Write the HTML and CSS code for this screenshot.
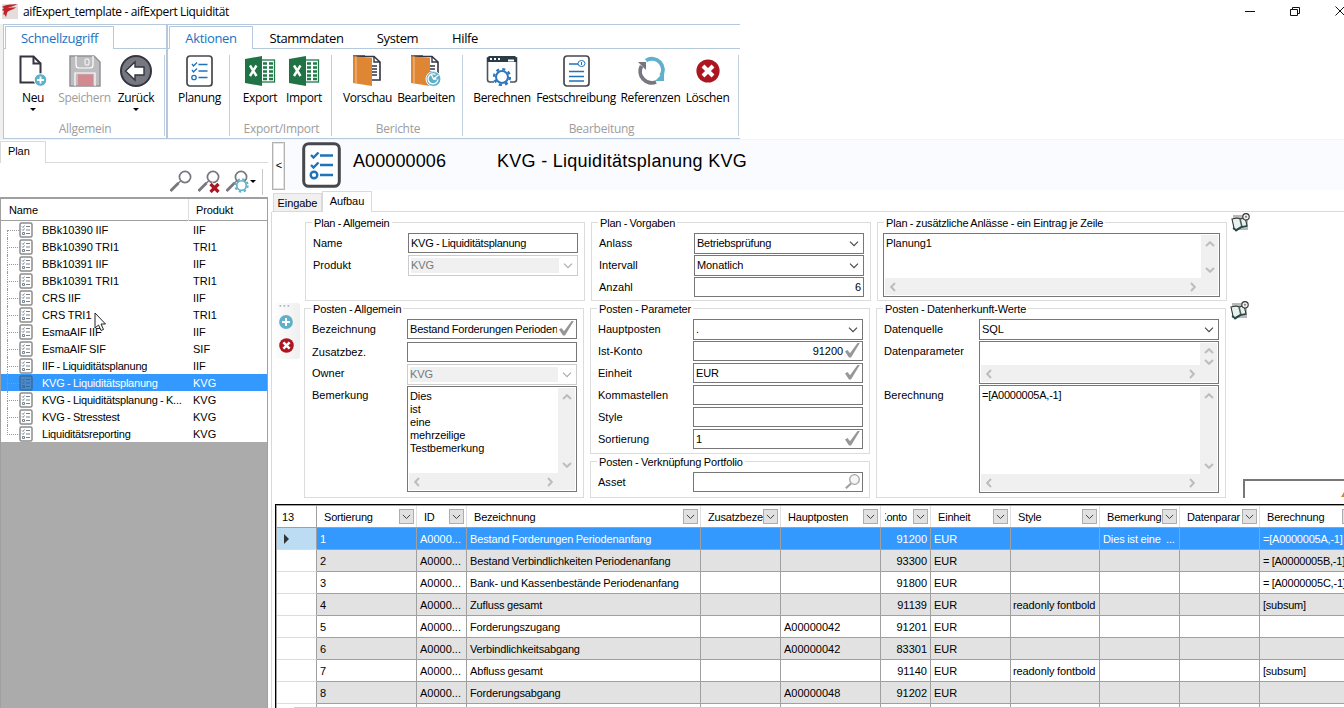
FILE: index.html
```html
<!DOCTYPE html>
<html lang="de">
<head>
<meta charset="utf-8">
<title>aifExpert_template - aifExpert Liquidität</title>
<link rel="stylesheet" href="styles.css">
</head>
<body>
<svg class="defs" width="0" height="0">
  <symbol id="plan" viewBox="0 0 39 46">
    <rect x="1.700" y="1.700" width="35.600" height="42.600" rx="5" fill="#fff" stroke="#47484d" stroke-width="3"/>
    <g fill="none" stroke="#1d74bb" stroke-width="2.400"><path d="M9 13l2.500 2.500 5-5M9 23l2.500 2.500 5-5M18 13.500h13M18 23h13M18 33h13"/><circle cx="12" cy="33" r="3.300"/></g>
  </symbol>
  <symbol id="treeplan" viewBox="0 0 14 16">
    <rect x="1" y="1" width="12" height="14" rx="1.500" fill="#fff" fill-opacity=".75" stroke="#8c8c8c" stroke-width="1.500"/>
    <path d="M3 4.500l1 1 1.500-2M3 7.500l1 1 1.500-2M7 4.500h4M7 8h4M7 11.500h4M3.500 10.500h2v2h-2z" fill="none" stroke="#76828e" stroke-width="1"/>
  </symbol>
  <symbol id="chev" viewBox="0 0 10 6"><path d="M1 .7l4 4 4-4" fill="none" stroke="currentColor" stroke-width="1.100"/></symbol>
  <symbol id="fat" viewBox="0 0 10 6"><path d="M1 1l4 3.800 4-3.800" fill="none" stroke="#bdbdbd" stroke-width="2"/></symbol>
  <symbol id="check" viewBox="0 0 15 15"><path d="M0 8.500l2.500-1.500 2.500 3.200L12.500 0h2.300L6 14.500H4z" fill="#979797"/></symbol>
  <symbol id="lens" viewBox="0 0 22 22"><circle cx="15" cy="7" r="5.600" fill="none" stroke="#77777f" stroke-width="1.700"/><path d="M10.500 11L8 13.500" stroke="#77777f" stroke-width="1.500"/><path d="M8.500 13l-8 8" stroke="#77777f" stroke-width="2.800"/></symbol>
  <symbol id="excel" viewBox="0 0 32 32">
    <rect x="17" y="5" width="13.500" height="22" fill="#fff" stroke="#21794a" stroke-width="1.300"/>
    <path d="M19 8.500h4M25 8.500h4M19 12.500h4M25 12.500h4M19 16.500h4M25 16.500h4M19 20.500h4M25 20.500h4M19 24h4M25 24h4" stroke="#21794a" stroke-width="2.400"/>
    <path d="M1 4L18 1v30L1 28z" fill="#1f7345"/><path d="M6 10.500l6.500 10.500M12.500 10.500L6 21" stroke="#fff" stroke-width="2.400"/>
  </symbol>
  <symbol id="book" viewBox="1 0 30 32">
    <path d="M4 1.500h18l6 5.500v18h-9" fill="#fff" stroke="#333540" stroke-width="1.600"/><path d="M22 1.500V7h6M20 11h5M20 14h5M20 17h5M20 20h5" fill="none" stroke="#333540" stroke-width="1.400"/>
    <path d="M1 1l19 2v28L1 28z" fill="#df8635"/><path d="M4 1.300v27.500" stroke="#f5c59b" stroke-width="1"/><path d="M1 .8h12" stroke="#333540" stroke-width="1"/>
  </symbol>
  <symbol id="cross" viewBox="0 0 24 24"><circle cx="12" cy="12" r="11.600" fill="#ab1620"/><path d="M7 7l10 10M17 7L7 17" stroke="#fff" stroke-width="4"/></symbol>
  <symbol id="gear" viewBox="0 0 20 20"><circle cx="10" cy="10" r="8.400" fill="none" stroke="currentColor" stroke-width="2.400" stroke-dasharray="3.300 3.300"/><circle cx="10" cy="10" r="6.300" fill="#fff" stroke="currentColor" stroke-width="2.200"/></symbol>
  <symbol id="note" viewBox="0 0 19 19">
    <path d="M2 2h15v15H2z" fill="#b9b9b9"/><path d="M1 6l5-1 4 1 4-2 2 9-5 1-6 4-2-3z" fill="#e9f1ee" stroke="#2b3434" stroke-width="1.100"/><path d="M9 6l2 8" stroke="#49605c" stroke-width="1.500"/><path d="M2 15l3 2 5-3 6-1" fill="none" stroke="#244a48" stroke-width="1.600"/><circle cx="15" cy="3.800" r="3.200" fill="#eee" stroke="#333" stroke-width="1.100"/><circle cx="15" cy="3.800" r="1" fill="#777"/>
  </symbol>
</svg>

<header class="titlebar">
  <svg class="logo" width="16" height="16" viewBox="0 0 16 16"><rect y="1" width="16" height="15" fill="#e3dedc"/><path d="M0 4c4-3 9-2 15-3-3 3-7 2-9 4 3-1 5 0 8-1-3 4-7 2-9 6l-1 4-2-3-1 1 1-4-2-1 2-2z" fill="#c3222b"/></svg>
  <span class="apptitle">aifExpert_template - aifExpert Liquidität</span>
  <svg class="winbtns" width="110" height="20" viewBox="0 0 110 20" fill="none" stroke="#111"><path d="M11 10.500h10M101.500 5.500l9 9M110.500 5.500l-9 9"/><path d="M56.500 8.500h7v6h-7zM58.500 8.500v-2h7v6h-2"/></svg>
</header>

<nav class="ribbon">
  <section class="rpart quick">
    <div class="rtabs"><span class="rtab active">Schnellzugriff</span></div>
    <div class="rgroups">
      <div class="rgroup allg"><div class="rbtns">
        <div class="rbtn"><svg width="28" height="32" viewBox="0 0 28 32"><path d="M1.500 1.500h13l7 7v19h-20z" fill="#fff" stroke="#333540" stroke-width="2"/><path d="M14.500 1.500v7h7" fill="none" stroke="#333540" stroke-width="2"/><circle cx="21.500" cy="25" r="6.300" fill="#5fb0cb" stroke="#fff"/><path d="M18 25h7M21.500 21.500v7" stroke="#fff" stroke-width="1.800"/></svg><span>Neu</span><i class="drop"></i></div>
        <div class="rbtn off"><svg width="32" height="32" viewBox="0 0 32 32"><path d="M1 1h24l6 6v24H1z" fill="#bdbdc0" stroke="#929296" stroke-width="1.500"/><path d="M7 1v9q0 3 3 3h11q3 0 3-3V1M6 31V18h20v13" fill="none" stroke="#fff" stroke-width="1.200"/><rect x="9" y="19.500" width="15" height="11" fill="#d28a90"/><rect x="16" y="4" width="4" height="6" rx="1" fill="none" stroke="#fff"/></svg><span>Speichern</span></div>
        <div class="rbtn"><svg width="32" height="32" viewBox="0 0 32 32"><circle cx="16" cy="16" r="15" fill="#777780" stroke="#333540" stroke-width="2"/><path d="M5.500 16L15 7v5h9v8h-9v5z" fill="#fff" stroke="#333540" stroke-width="1.400"/></svg><span>Zurück</span><i class="drop"></i></div>
      </div><div class="rlabel">Allgemein</div></div>
    </div>
  </section>
  <section class="rpart main">
    <div class="rtabs"><span class="rtab active akt">Aktionen</span><span class="rtab stamm">Stammdaten</span><span class="rtab sys">System</span><span class="rtab hilfe">Hilfe</span></div>
    <div class="rgroups">
      <div class="rgroup g1"><div class="rbtns"><div class="rbtn"><svg width="27" height="32" viewBox="0 0 27 32"><rect x="1" y="1" width="25" height="30" rx="3" fill="#fff" stroke="#47484d" stroke-width="1.700"/><path d="M6 9l1.500 2L11 7.500M6 15l1.500 2 3.500-3.500M12.500 9.500h9M12.500 16h9M12.500 22.500h9" fill="none" stroke="#1d74bb" stroke-width="1.300"/><circle cx="8" cy="22.500" r="2.200" fill="none" stroke="#1d74bb" stroke-width="1.300"/></svg><span>Planung</span></div></div></div>
      <div class="rgroup g2"><div class="rbtns"><div class="rbtn"><svg width="32" height="32"><use href="#excel"/></svg><span>Export</span></div><div class="rbtn"><svg width="32" height="32"><use href="#excel"/></svg><span>Import</span></div></div><div class="rlabel">Export/Import</div></div>
      <div class="rgroup g3"><div class="rbtns"><div class="rbtn"><svg width="30" height="32"><use href="#book"/></svg><span>Vorschau</span></div><div class="rbtn"><svg width="30" height="32" viewBox="0 0 30 32"><use href="#book" width="30" height="32"/><circle cx="22.500" cy="24" r="7.500" fill="#5fb0cb" stroke="#fff"/><path d="M24.500 19.500a5 5 0 1 0 2.500 5M20.500 20l2 4 5-4M22.500 24h3" fill="none" stroke="#fff" stroke-width="1.300"/></svg><span>Bearbeiten</span></div></div><div class="rlabel">Berichte</div></div>
      <div class="rgroup g4"><div class="rbtns">
        <div class="rbtn"><svg width="32" height="32" viewBox="0 0 32 32"><path d="M8 27H4a2.500 2.500 0 0 1-2.500-2.500V3h29v21.500A2.500 2.500 0 0 1 28 27h-4" fill="none" stroke="#4a5560" stroke-width="1.600"/><path d="M1 7V3l2-2h26l2 2v4z" fill="#2b3c49"/><path d="M4 4h2M8 4h2M12 4h2M22 5.500h6" stroke="#fff" stroke-width="2"/><g color="#2c77bd"><use href="#gear" x="6.500" y="12.500" width="19" height="19"/></g></svg><span>Berechnen</span></div>
        <div class="rbtn"><svg width="27" height="32" viewBox="0 0 27 32"><rect x="1" y="1" width="25" height="30" rx="3" fill="#fff" stroke="#47484d" stroke-width="1.700"/><path d="M6 9h10M6 16.500h15M6 21.500h15M6 26h15" stroke="#1d74bb" stroke-width="1.400"/><ellipse cx="18.500" cy="8.500" rx="3.500" ry="3" fill="#fff" stroke="#1d74bb"/><path d="M18.500 7v3" stroke="#1d74bb"/></svg><span>Festschreibung</span></div>
        <div class="rbtn"><svg width="28" height="32" viewBox="0 0 28 32"><path d="M9 5.500A11 11 0 0 1 24 21" fill="none" stroke="#5fb0cb" stroke-width="3.800"/><path d="M27 17v9h-9z" fill="#5fb0cb"/><path d="M19 27A11.500 11.500 0 0 1 4.500 11" fill="none" stroke="#777780" stroke-width="3.800"/><path d="M1 7h8v8z" fill="#777780"/></svg><span>Referenzen</span></div>
        <div class="rbtn"><svg width="24" height="32" viewBox="0 0 24 32"><use href="#cross" y="4" width="24" height="24"/></svg><span>Löschen</span></div>
      </div><div class="rlabel">Bearbeitung</div></div>
    </div>
  </section>
</nav>

<main class="work">
  <aside class="side">
    <div class="sidetabs"><span class="sidetab">Plan</span></div>
    <div class="sidetools">
      <svg width="22" height="22"><use href="#lens"/></svg>
      <svg width="22" height="23" viewBox="0 0 22 23"><use href="#lens" width="22" height="22"/><path d="M12.500 14l8 8M20.500 14l-8 8" stroke="#fff" stroke-width="5"/><path d="M12.500 14l8 8M20.500 14l-8 8" stroke="#ab1620" stroke-width="3.200"/></svg>
      <svg width="23" height="23" viewBox="0 0 23 23"><use href="#lens" width="22" height="22"/><g color="#5fb0cb"><use href="#gear" x="8" y="8" width="15" height="15"/></g></svg>
      <i class="drop"></i>
    </div>
    <div class="tree">
      <div class="trow thead"><span>Name</span><span>Produkt</span></div>
      <div class="tbody">
      <div class="trow"><svg><use href="#treeplan"/></svg><span>BBk10390 IIF</span><span>IIF</span></div>
      <div class="trow"><svg><use href="#treeplan"/></svg><span>BBk10390 TRI1</span><span>TRI1</span></div>
      <div class="trow"><svg><use href="#treeplan"/></svg><span>BBk10391 IIF</span><span>IIF</span></div>
      <div class="trow"><svg><use href="#treeplan"/></svg><span>BBk10391 TRI1</span><span>TRI1</span></div>
      <div class="trow"><svg><use href="#treeplan"/></svg><span>CRS IIF</span><span>IIF</span></div>
      <div class="trow"><svg><use href="#treeplan"/></svg><span>CRS TRI1</span><span>TRI1</span></div>
      <div class="trow"><svg><use href="#treeplan"/></svg><span class="n2x">EsmaAIF IIF</span><span>IIF</span></div>
      <div class="trow"><svg><use href="#treeplan"/></svg><span class="n2x">EsmaAIF SIF</span><span>SIF</span></div>
      <div class="trow"><svg><use href="#treeplan"/></svg><span class="n1">IIF - Liquiditätsplanung</span><span>IIF</span></div>
      <div class="trow sel"><svg><use href="#treeplan"/></svg><span class="n1">KVG - Liquiditätsplanung</span><span>KVG</span></div>
      <div class="trow"><svg><use href="#treeplan"/></svg><span class="n1">KVG - Liquiditätsplanung - K...</span><span>KVG</span></div>
      <div class="trow"><svg><use href="#treeplan"/></svg><span class="n1">KVG - Stresstest</span><span>KVG</span></div>
      <div class="trow"><svg><use href="#treeplan"/></svg><span class="n1">Liquiditätsreporting</span><span>KVG</span></div>
      </div>
      <svg class="cursor" width="13" height="20" viewBox="0 0 13 20"><path d="M1 1v15l3.500-3 2.500 5.500 2.500-1-2.500-5.500h4.500z" fill="#fff" stroke="#222"/></svg>
    </div>
  </aside>

  <section class="detail">
    <div class="dhead">
      <div class="collapse">&lt;</div>
      <svg class="dicon" width="39" height="46"><use href="#plan"/></svg>
      <span class="did">A00000006</span><span class="dname">KVG - Liquiditätsplanung KVG</span>
    </div>
    <div class="dtabs"><span class="dtab">Eingabe</span><span class="dtab active">Aufbau</span></div>

    <div class="page">
      <div class="line1">
        <div class="group pa"><b>Plan - Allgemein</b>
          <div class="field"><label>Name</label><div class="in n1">KVG - Liquiditätsplanung</div></div>
          <div class="field"><label>Produkt</label><div class="in combo dis"><span>KVG</span><svg><use href="#chev"/></svg></div></div>
        </div>
        <div class="group pv"><b>Plan - Vorgaben</b>
          <div class="field"><label>Anlass</label><div class="in combo n1">Betriebsprüfung<svg><use href="#chev"/></svg></div></div>
          <div class="field"><label>Intervall</label><div class="in combo">Monatlich<svg><use href="#chev"/></svg></div></div>
          <div class="field"><label>Anzahl</label><div class="in num">6</div></div>
        </div>
        <div class="group pz"><b>Plan - zusätzliche Anlässe - ein Eintrag je Zeile</b>
          <div class="area a1"><div class="txt">Planung1</div><div class="vs"><svg class="up"><use href="#fat"/></svg><svg><use href="#fat"/></svg></div><div class="hs"><svg class="lt"><use href="#fat"/></svg><svg class="rt"><use href="#fat"/></svg></div></div>
        </div>
        <svg class="note" width="19" height="19"><use href="#note"/></svg>
      </div>
      <div class="line2">
        <div class="tools"><em>•••</em><svg width="14" height="14" viewBox="0 0 14 14"><circle cx="7" cy="7" r="6.900" fill="#5fb0cb"/><path d="M3 7h8M7 3v8" stroke="#fff" stroke-width="2"/></svg><svg width="15" height="15"><use href="#cross"/></svg></div>
        <div class="group qa"><b>Posten - Allgemein</b>
          <div class="field"><label>Bezeichnung</label><div class="in chk"><span class="clip">Bestand Forderungen Periodenanfang</span><svg><use href="#check"/></svg></div></div>
          <div class="field zus"><label>Zusatzbez.</label><div class="in"></div></div>
          <div class="field own"><label>Owner</label><div class="in combo dis"><span>KVG</span><svg><use href="#chev"/></svg></div></div>
          <div class="field bem"><label>Bemerkung</label><div class="area"><div class="txt">Dies<br>ist<br>eine<br>mehrzeilige<br>Testbemerkung</div><div class="vs"><svg class="up"><use href="#fat"/></svg><svg><use href="#fat"/></svg></div><div class="hs"><svg class="lt"><use href="#fat"/></svg><svg class="rt"><use href="#fat"/></svg></div></div></div>
        </div>
        <div class="col2">
          <div class="group qp"><b>Posten - Parameter</b>
            <div class="field"><label>Hauptposten</label><div class="in combo">.<svg><use href="#chev"/></svg></div></div>
            <div class="field"><label>Ist-Konto</label><div class="in num chk">91200<svg><use href="#check"/></svg></div></div>
            <div class="field"><label>Einheit</label><div class="in chk">EUR<svg><use href="#check"/></svg></div></div>
            <div class="field"><label>Kommastellen</label><div class="in"></div></div>
            <div class="field"><label>Style</label><div class="in"></div></div>
            <div class="field"><label>Sortierung</label><div class="in chk">1<svg><use href="#check"/></svg></div></div>
          </div>
          <div class="group qv"><b>Posten - Verknüpfung Portfolio</b>
            <div class="field"><label>Asset</label><div class="in find"><svg viewBox="0 0 15 15"><circle cx="9.500" cy="5.500" r="4.800" fill="#f6f6f6" stroke="#a5a5a5" stroke-width="1.300"/><path d="M6 9.500L.8 14.200" stroke="#a0a0a0" stroke-width="2.200"/></svg></div></div>
          </div>
        </div>
        <div class="group qd"><b>Posten - Datenherkunft-Werte</b>
          <div class="field"><label>Datenquelle</label><div class="in combo">SQL<svg><use href="#chev"/></svg></div></div>
          <div class="field dpar"><label>Datenparameter</label><div class="area"><div class="txt"></div><div class="vs"><svg class="up"><use href="#fat"/></svg><svg><use href="#fat"/></svg></div><div class="hs"><svg class="lt"><use href="#fat"/></svg><svg class="rt"><use href="#fat"/></svg></div></div></div>
          <div class="field dber"><label>Berechnung</label><div class="area"><div class="txt n1">=[A0000005A,-1]</div><div class="vs"><svg class="up"><use href="#fat"/></svg><svg><use href="#fat"/></svg></div><div class="hs"><svg class="lt"><use href="#fat"/></svg><svg class="rt"><use href="#fat"/></svg></div></div></div>
        </div>
        <svg class="note n2" width="19" height="19"><use href="#note"/></svg>
        <div class="corner"><svg width="3" height="7" viewBox="0 0 3 7"><path d="M0 6l3-5v5z" fill="#d78035"/></svg></div>
      </div>

      <div class="gridbox">
      <table class="grid">
        <colgroup><col class="c0"><col class="c1"><col class="c2"><col class="c3"><col class="c4"><col class="c5"><col class="c2"><col class="c4"><col class="c8"><col class="c4"><col class="c4"><col class="c5"></colgroup>
        <thead><tr><th class="cnt">13</th>
          <th><div><span>Sortierung</span><i><svg><use href="#chev"/></svg></i></div></th><th><div><span>ID</span><i><svg><use href="#chev"/></svg></i></div></th><th><div><span>Bezeichnung</span><i><svg><use href="#chev"/></svg></i></div></th><th><div><span>Zusatzbeze</span><i><svg><use href="#chev"/></svg></i></div></th><th><div><span>Hauptposten</span><i><svg><use href="#chev"/></svg></i></div></th><th class="konto"><div><span>Konto</span><i><svg><use href="#chev"/></svg></i></div></th><th><div><span>Einheit</span><i><svg><use href="#chev"/></svg></i></div></th><th><div><span>Style</span><i><svg><use href="#chev"/></svg></i></div></th><th><div><span>Bemerkung</span><i><svg><use href="#chev"/></svg></i></div></th><th><div><span>Datenparar</span><i><svg><use href="#chev"/></svg></i></div></th><th><div><span>Berechnung</span><i><svg><use href="#chev"/></svg></i></div></th></tr></thead>
        <tbody>
          <tr class="sel"><td><u></u></td><td>1</td><td>A0000...</td><td>Bestand Forderungen Periodenanfang</td><td></td><td></td><td>91200</td><td>EUR</td><td></td><td>Dies ist eine &nbsp;...</td><td></td><td>=[A0000005A,-1]</td></tr>
          <tr><td></td><td>2</td><td>A0000...</td><td>Bestand Verbindlichkeiten Periodenanfang</td><td></td><td></td><td>93300</td><td>EUR</td><td></td><td></td><td></td><td>= [A0000005B,-1]</td></tr>
          <tr><td></td><td>3</td><td>A0000...</td><td>Bank- und Kassenbestände Periodenanfang</td><td></td><td></td><td>91800</td><td>EUR</td><td></td><td></td><td></td><td>= [A0000005C,-1]</td></tr>
          <tr><td></td><td>4</td><td>A0000...</td><td>Zufluss gesamt</td><td></td><td></td><td>91139</td><td>EUR</td><td>readonly fontbold</td><td></td><td></td><td>[subsum]</td></tr>
          <tr><td></td><td>5</td><td>A0000...</td><td>Forderungszugang</td><td></td><td>A00000042</td><td>91201</td><td>EUR</td><td></td><td></td><td></td><td></td></tr>
          <tr><td></td><td>6</td><td>A0000...</td><td>Verbindlichkeitsabgang</td><td></td><td>A00000042</td><td>83301</td><td>EUR</td><td></td><td></td><td></td><td></td></tr>
          <tr><td></td><td>7</td><td>A0000...</td><td>Abfluss gesamt</td><td></td><td></td><td>91140</td><td>EUR</td><td>readonly fontbold</td><td></td><td></td><td>[subsum]</td></tr>
          <tr><td></td><td>8</td><td>A0000...</td><td>Forderungsabgang</td><td></td><td>A00000048</td><td>91202</td><td>EUR</td><td></td><td></td><td></td><td></td></tr>
          <tr><td></td><td></td><td></td><td></td><td></td><td></td><td></td><td></td><td></td><td></td><td></td><td></td></tr>
        </tbody>
      </table>
      <div class="hscroll"></div>
      </div>
    </div>
  </section>
</main>
</body>
</html>
```
FILE: styles.css
```css
* { box-sizing: border-box; }
body { margin: 0; width: 1344px; height: 708px; overflow: hidden; background: #fff; color: #000; font: 11px/14px "Liberation Sans", Arial, sans-serif; white-space: nowrap; }
svg { display: block; flex: none; }
.defs { position: absolute; }
.n1 { letter-spacing: -.24px; }
.n2x { letter-spacing: -.1px; }

.titlebar { height: 24px; display: flex; align-items: center; padding-left: 2px; font: 12px/16px "Open Sans", "Noto Sans", sans-serif; }
.logo { margin-top: -3px; }
.apptitle { margin-left: 5px; letter-spacing: -.37px; }
.winbtns { margin: -3px 0 0 auto; }

.ribbon { height: 116px; display: flex; font: 12px/16px "Open Sans", "Noto Sans", sans-serif; border-left: 3px solid #f0f0f0; border-bottom: 1px solid #f3f3f3; }
.rpart { height: 115px; border-top: 1px solid #b5c8dc; border-bottom: 1px solid #b5c8dc; display: flex; flex-direction: column; }
.quick { width: 164px; border-left: 1px solid #b5c8dc; border-right: 1px solid #b5c8dc; }
.main { width: 573px; border-left: 1px solid #b5c8dc; }
.rtabs { height: 24px; display: flex; box-shadow: inset 0 -1px #b5c8dc; }
.rtab { line-height: 26px; text-align: center; font-size: 13px; letter-spacing: -.4px; }
.rtab.active { color: #1a72c4; background: #fff; border: solid #b5c8dc; border-width: 1px 1px 0; margin-top: 1px; line-height: 22px; letter-spacing: -.33px; }
.quick .rtab { width: 109px; margin-left: 1px; }
.akt { width: 84px; margin-left: 1px; }
.stamm { width: 107px; }
.sys { width: 75px; }
.hilfe { width: 60px; }
.rgroups { flex: 1; display: flex; }
.rgroup { display: flex; flex-direction: column; justify-content: space-between; margin: 6px 0 0; border-right: 1px solid #c0cedd; height: 81px; }
.allg { width: 161px; }
.g1 { width: 62px; } .g2 { width: 102px; } .g3 { width: 131px; } .g4 { width: 276px; }
.rbtns { display: flex; height: 59px; }
.rbtn { display: flex; flex-direction: column; align-items: center; width: 52px; letter-spacing: -.38px; }
.rbtn span { margin-top: 2px; line-height: 17px; }
.rbtn.off span, .rlabel { color: #9d9d9d; }
.allg .rbtns { padding-left: 3px; }
.allg .rbtn:nth-child(2) { width: 51px; }
.g1 .rbtn { width: 63px; flex: none; }
.g2 .rbtns { padding-left: 8px; } .g2 .rbtn { width: 44px; }
.g3 .rbtns { padding-left: 6px; } .g3 .rbtn { width: 59px; }
.g3 .rbtn:nth-child(2) { width: 58px; }
.g4 .rbtns { padding-left: 5px; } .g4 .rbtn { width: 68px; } .g4 .rbtn:nth-child(2) { width: 80px; } .g4 .rbtn:nth-child(3) { width: 69px; } .g4 .rbtn:nth-child(4) { width: 45px; }
.rlabel { text-align: center; height: 16px; line-height: 17px; letter-spacing: -.27px; padding-left: 2px; }
.drop { border: 3px solid transparent; border-top-color: #000; border-bottom: 0; width: 0; }
.rbtn .drop { margin-top: 2px; }

.work { display: flex; height: 568px; letter-spacing: -.08px; word-spacing: -.4px; }
.side { width: 272px; background: #fff; display: flex; flex-direction: column; }
.sidetabs { height: 23px; display: flex; width: 268px; box-shadow: inset 0 -1px #d9d9d9; }
.sidetab { background: #fff; width: 46px; border: 1px solid #d9d9d9; border-bottom: 0; margin-top: 1px; padding-left: 7px; line-height: 18px; }
.sidetools { height: 34px; width: 263px; display: flex; align-items: flex-start; gap: 6px; padding: 7px 0 0 170px; background: linear-gradient(#c8c8c8, #c8c8c8) 262px 6px / 1px 26px no-repeat; }
.sidetools .drop { margin: 10px 0 0 -5px; }
.tree { position: relative; width: 268px; flex: 1; background: #ababab; border: solid #a0a0a0; border-width: 2px 1px 0; display: flex; flex-direction: column; }
.trow { position: relative; height: 17px; line-height: 18px; background: #fff; display: grid; grid-template-columns: 14px 151px 1fr; padding-left: 18px; align-items: center; }
.trow svg { width: 14px; height: 16px; }
.trow span { padding-left: 9px; letter-spacing: 0; }
.trow .n1 { letter-spacing: -.22px; }
.trow .n2x { letter-spacing: -.1px; }
.thead { height: 22px; grid-template-columns: 187px 1fr; padding: 0; border-bottom: 1px solid #a0a0a0; }
.trow.thead span { padding-left: 8px; line-height: 23px; letter-spacing: -.1px; }
.trow.thead span:last-child { border-left: 1px solid #ddd; padding-left: 7px; }
.tbody .trow::before { content: ""; position: absolute; left: 6px; top: 0; width: 12px; height: 9px; border-left: 1px dotted #999; border-bottom: 1px dotted #999; }
.tbody .trow:not(:last-child)::after { content: ""; position: absolute; left: 6px; top: 9px; height: 8px; border-left: 1px dotted #999; }
.tbody .trow:first-child::before { border-left: 0; }
.tree .sel { background: #3399ff; color: #fff; }
.tree .sel svg { filter: brightness(.45); opacity: .5; }
.cursor { position: absolute; left: 93px; top: 113px; }

.detail { width: 1072px; display: flex; flex-direction: column; }
.dhead { height: 50px; background: #fafbfe; display: flex; font-size: 18px; line-height: 43px; word-spacing: 0; }
.collapse { width: 13px; height: 48px; margin: 2px 0 0; border: 1px solid #b2b2b2; background: #fff; box-shadow: inset 0 0 0 1px #e3e3e3; text-align: center; font-size: 11px; line-height: 45px; padding-left: 1px; }
.dicon { margin: 2px 0 0 17px; }
.did { margin-left: 12px; width: 144px; letter-spacing: .1px; }
.dname { letter-spacing: .28px; }
.dtabs { height: 22px; display: flex; align-items: flex-end; box-shadow: inset 0 -1px #d9d9d9; }
.dtab { margin-left: 1px; width: 49px; height: 19px; background: #f0f0f0; border: 1px solid #d9d9d9; text-align: center; line-height: 18px; }
.dtab.active { margin: 0; width: 50px; height: 21px; background: #fff; border-bottom: 0; }

.page { height: 496px; border-left: 1px solid #d9d9d9; margin-left: -1px; display: flex; flex-direction: column; }
.line1 { display: flex; height: 89px; padding: 10px 0 0 33px; align-items: flex-start; }
.line2 { display: flex; height: 203px; padding: 7px 0 0 3px; align-items: flex-start; }
.group { border: 1px solid #dcdcdc; padding: 0 6px 0 7px; display: flex; flex-direction: column; flex: none; }
.group b { font-weight: 400; background: #fff; align-self: flex-start; margin: -7px 0 3px -1px; padding: 0 2px; line-height: 14px; height: 14px; letter-spacing: -.2px; }
.line2 .group b { letter-spacing: -.14px; }
.field { display: flex; height: 22px; }
.field label { width: 95px; line-height: 20px; letter-spacing: .03px; }
.in { flex: 1; height: 20px; border: 1px solid #777; background: #fff; line-height: 19px; padding: 0 2px; display: flex; min-width: 0; }
.combo { height: 21px; justify-content: space-between; align-items: flex-start; }
.combo svg { width: 10px; height: 6px; margin: 7px 2px 0 0; color: #444; }
.dis { border-color: #ccc; color: #777; padding: 2px 2px; line-height: 15px; }
.dis span { background: #f0f0f0; width: 148px; height: 15px; }
.dis svg { margin-top: 5px; color: #aaa; }
.num { justify-content: flex-end; }
.chk { justify-content: space-between; padding-right: 1px; }
.chk.num { justify-content: flex-end; }
.in.chk svg, .find svg { width: 15px; height: 15px; margin: 1px 1px 0 2px; }
.find { justify-content: flex-end; padding-right: 1px; }
.clip { width: 149px; overflow: hidden; letter-spacing: -.17px; }
.pa { width: 280px; height: 79px; } .pv { width: 280px; height: 79px; margin-left: 6px; } .pz { width: 350px; height: 79px; margin-left: 6px; padding-left: 5px; }
.pz b { margin-left: 1px; letter-spacing: -.17px; }
.note { margin: -9px 0 0 4px; }
.n2 { margin-top: -7px; }
.tools { width: 25px; height: 56px; background: linear-gradient(90deg, #fdfdfd, #efefef); border-radius: 3px; margin-top: -5px; display: flex; flex-direction: column; align-items: center; }
.tools em { font: 6px/6px "DejaVu Sans", sans-serif; color: #aaa; margin: 0 0 6px -6px; letter-spacing: .5px; }
.tools svg { margin: 0 0 9px -3px; }
.qa { width: 280px; height: 190px; margin-left: 4px; }
.zus { height: 23px; padding-top: 1px; }
.own label, .bem label { line-height: 18px; }
.bem, .dpar, .dber { height: auto; }
.col2 { margin-left: 6px; display: flex; flex-direction: column; gap: 7px; }
.qp { width: 280px; height: 146px; } .qv { width: 280px; height: 37px; }
.qd { width: 350px; height: 190px; margin-left: 6px; }
.area { flex: 1; border: 1px solid #777; background: #fff; padding: 1px; display: grid; grid-template-columns: 1fr 17px; grid-template-rows: 1fr 17px; min-width: 0; }
.area .txt { padding: 2px 0 0 1px; line-height: 13px; }
.vs { background: #f0f0f0; grid-row: 1 / 3; grid-column: 2; display: flex; flex-direction: column; justify-content: space-between; align-items: center; padding: 6px 0 22px; }
.hs { background: #f0f0f0; grid-row: 2; grid-column: 1; display: flex; justify-content: space-between; align-items: center; padding: 0 3px 0 3px; }
.vs svg, .hs svg { width: 10px; height: 6px; }
.up { transform: rotate(180deg); } .lt { transform: rotate(90deg); } .rt { transform: rotate(-90deg); }
.a1 { height: 64px; flex: none; }
.bem .area { height: 106px; }
.dpar .area { height: 43px; margin-bottom: 1px; } .dpar .vs { padding: 5px 0 17px; }
.dber .area { height: 108px; }
.corner { margin: 171px 0 0 -6px; width: 101px; height: 19px; border: 1px solid #777; border-width: 2px 0 0 2px; display: flex; justify-content: flex-end; align-items: flex-end; flex: none; }

.gridbox { margin-left: 3px; width: 1069px; height: 204px; border: solid #000; border-width: 1px 0 0 1px; overflow: hidden; position: relative; }
.grid { width: 1084px; table-layout: fixed; border-collapse: separate; border-spacing: 0; border: solid #a0a0a0; border-width: 1px 0 0 1px; }
.c0 { width: 40px; } .c1 { width: 100px; } .c2 { width: 50px; } .c3 { width: 234px; } .c4 { width: 80px; } .c5 { width: 100px; } .c8 { width: 89px; }
.grid th { font-weight: 400; height: 22px; padding: 0; border: solid #a0a0a0; border-width: 0 0 1px; box-shadow: inset -1px 0 #e0e0e0; text-align: left; }
.grid th.cnt { padding-left: 5px; border-right-width: 1px; box-shadow: none; }
.grid th div { display: flex; align-items: center; padding: 0 3px 0 7px; height: 21px; }
.grid th span { flex: 1; min-width: 0; letter-spacing: -.2px; }
.grid th i { width: 15px; height: 15px; background: #e1e1e1; border: 1px solid #adadad; display: flex; align-items: center; justify-content: center; color: #444; flex: none; }
.grid th svg { width: 9px; height: 6px; }
.grid .konto div { padding-left: 4px; }
.grid .konto span { display: flex; justify-content: flex-end; overflow: hidden; margin-right: 6px; }
.grid td { height: 22px; padding: 0 3px; border: solid #a0a0a0; border-width: 0 1px 1px 0; overflow: hidden; letter-spacing: 0; }
.grid td:nth-child(4) { letter-spacing: -.15px; }
.grid td:nth-child(9), .grid td:nth-child(10) { letter-spacing: -.1px; padding: 0 0 0 2px; }
.grid td:nth-child(10) { padding-left: 3px; }
.grid td:nth-child(12) { letter-spacing: -.22px; }
.grid tr:nth-child(even) td { background: #e2e2e2; }
.grid td:nth-child(7) { text-align: right; }
.grid tbody td:first-child, .grid tbody tr:nth-child(even) td:first-child { background: #fff; border-bottom-color: #ddd; }
.grid .sel td { background: #3399ff; color: #fff; }
.grid tbody .sel td:first-child { background: #bcdcf4; }
.grid u { display: block; width: 0; border: 5px solid transparent; border-left-color: #333; border-right: 0; margin-left: 4px; }
.hscroll { position: absolute; left: 18px; right: 0; bottom: 0; height: 1px; background: #cdcdcd; }
```
